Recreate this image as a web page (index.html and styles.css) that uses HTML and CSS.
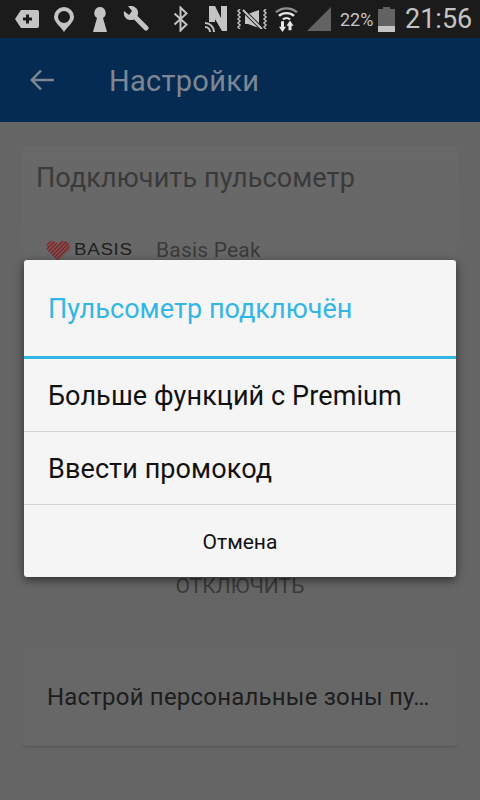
FILE: index.html
```html
<!DOCTYPE html>
<html lang="ru">
<head>
    <meta charset="UTF-8">
    <meta name="viewport" content="width=device-width, initial-scale=1.0">
    <title>Настройки</title>
    <link rel="stylesheet" href="styles.css">
</head>
<body>

    <!-- Status bar -->
    <div class="status-bar">
        <svg class="ic ic-tag" viewBox="0 0 24 20"><path fill="#c4c4c4" d="M6 1h16a2 2 0 0 1 2 2v14a2 2 0 0 1-2 2H6L0 10z"/><path fill="#1b1b1b" d="M11 5.500h3v3h3v3h-3v3h-3v-3H8v-3h3z"/></svg>
        <svg class="ic ic-pin" viewBox="0 0 20 25"><path fill="#c4c4c4" fill-rule="evenodd" d="M10 0a10 10 0 0 1 10 10c0 5-6 9-10 15C6 19 0 15 0 10A10 10 0 0 1 10 0zm0 4a6 6 0 1 0 0 12 6 6 0 0 0 0-12z"/></svg>
        <svg class="ic ic-key" viewBox="0 0 14 25"><path fill="#c4c4c4" d="M7 0a6 6 0 0 1 3 11l4 14H0l4-14A6 6 0 0 1 7 0z"/></svg>
        <svg class="ic ic-wrench" viewBox="0 0 26 26"><path fill="none" stroke="#c4c4c4" stroke-width="5" stroke-linecap="round" d="M11 10l12 12"/><path fill="#c4c4c4" d="M1 5l5 4 3-4-4-5c5-1 11 2 10 8-1 4-4 6-7 6-5 0-8-4-7-9z"/></svg>
        <svg class="ic ic-bt" viewBox="0 0 15 26"><path fill="none" stroke="#c4c4c4" stroke-width="2" d="M1.500 7.500l12 11-6 6V1.500l6 6-12 11"/></svg>
        <svg class="ic ic-n" viewBox="0 0 22 26"><path fill="#c4c4c4" d="M4 0h6l6 12V0h6v25h-5L10 13v3H4z"/><path fill="none" stroke="#c4c4c4" stroke-width="2" d="M0 17a9 9 0 0 1 9 9M0 21a5 5 0 0 1 5 5"/></svg>
        <svg class="ic ic-mute" viewBox="0 0 31 20"><path fill="none" stroke="#c4c4c4" stroke-width="1.500" d="M3 0l-2 2 2 2-2 2 2 2-2 2 2 2-2 2 2 2-2 2 2 2M29 0l-2 2 2 2-2 2 2 2-2 2 2 2-2 2 2 2-2 2 2 2"/><path fill="#c4c4c4" d="M8 5h3l11-4v18L11 15H8z"/><path fill="none" stroke="#1b1b1b" stroke-width="4" d="M5 0l20 20"/><path fill="none" stroke="#c4c4c4" stroke-width="2" d="M6 1l19 19"/></svg>
        <svg class="ic ic-wifi" viewBox="0 0 23 30" preserveAspectRatio="none"><path fill="none" stroke="#8f8f8f" stroke-width="2.500" d="M1 7c6-6 15-6 21 0"/><path fill="none" stroke="#e8e8e8" stroke-width="2.500" d="M4 11c4-4 11-4 15 0M8 15c2-2 5-2 7 0"/><path fill="#e8e8e8" d="M6 17h3v6h2l-3.500 6L4 23h2zM15 16l3.500 6h-2v5h-3v-5h-2z"/></svg>
        <svg class="ic ic-signal" viewBox="0 0 24 24"><path fill="#626262" d="M24 0v24H0z"/></svg>
        <span class="battery-text">22%</span>
        <div class="battery"><div class="battery-cap"></div><div class="battery-body"><div class="battery-level"></div></div></div>
        <span class="clock">21:56</span>
    </div>

    <!-- Toolbar -->
    <div class="toolbar">
        <svg class="back" viewBox="0 0 24 24"><path fill="none" stroke="#7d8794" stroke-width="2.500" d="M24 12H2M11 2.500L1.800 12l9.200 9.500"/></svg>
        <span class="toolbar-title">Настройки</span>
    </div>

    <div class="content">
        <div class="card card-connect">
            <h2 class="card-title">Подключить пульсометр</h2>
            <div class="device">
                <div class="basis-logo">
                    <svg class="basis-heart" viewBox="0 0 24 21">
                        <clipPath id="heart"><path d="M12 21L1 10C-1 5 2 1 6 1c3 0 5 1 6 4 1-3 3-4 6-4 4 0 7 4 5 9z"/></clipPath>
                        <g clip-path="url(#heart)" fill="none" stroke="#8a2327" stroke-width="1.700"><path d="M0 6L6 0M0 10L10 0M0 14L14 0M0 18L18 0M0 22L22 0M2 24L26 0M6 24L26 4M10 24L26 8M14 24L26 12"/></g>
                    </svg>
                    <span class="basis-word">BASIS</span>
                </div>
                <span class="device-name">Basis Peak</span>
            </div>
            <div class="disconnect">ОТКЛЮЧИТЬ</div>
        </div>
        <div class="card card-zones">
            <p class="zones-text">Настрой персональные зоны пу…</p>
        </div>
    </div>

    <!-- Dialog over the dimmed page -->
    <div class="dialog">
        <div class="dialog-title">Пульсометр подключён</div>
        <div class="dialog-item">Больше функций с Premium</div>
        <div class="dialog-item">Ввести промокод</div>
        <div class="dialog-cancel">Отмена</div>
    </div>

</body>
</html>
```

FILE: styles.css
```css
body {
    font-family: Roboto, "Noto Sans", sans-serif;
    background-color: #656565;
    margin: 0;
    padding: 0;
    width: 480px;
    height: 800px;
    overflow: hidden;
    position: relative;
}
.status-bar {
    height: 38px;
    background-color: #1b1b1b;
    display: flex;
    align-items: center;
    padding-left: 15px;
}
.ic {
    display: block;
    flex: none;
}
.ic-tag { width: 24px; height: 20px; }
.ic-pin { width: 20px; height: 25px; margin-left: 15px; }
.ic-key { width: 14px; height: 25px; margin-left: 19px; }
.ic-wrench { width: 26px; height: 26px; margin-left: 16px; }
.ic-bt { width: 15px; height: 26px; margin-left: 24px; }
.ic-n { width: 22px; height: 26px; margin-left: 17px; }
.ic-mute { width: 31px; height: 20px; margin-left: 10px; }
.ic-wifi { width: 23px; height: 27px; margin-left: 7px; }
.ic-signal { width: 24px; height: 24px; margin-left: 9px; }
.battery-text {
    color: #c4c4c4;
    font-size: 18px;
    margin-left: 9px;
    width: 38px;
    flex: none;
}
.battery {
    width: 17px;
    height: 25px;
    display: flex;
    flex-direction: column;
    align-items: center;
    flex: none;
}
.battery-cap {
    width: 7px;
    height: 2px;
    background-color: #626262;
}
.battery-body {
    width: 17px;
    flex: 1;
    background-color: #626262;
    display: flex;
    align-items: flex-end;
}
.battery-level {
    width: 100%;
    height: 6px;
    background-color: #c4c4c4;
}
.clock {
    color: #c4c4c4;
    font-size: 27px;
    margin-left: 10px;
}
.toolbar {
    height: 84px;
    background-color: #062b52;
    display: flex;
    align-items: center;
    padding-left: 30px;
}
.back {
    width: 24px;
    height: 24px;
}
.toolbar-title {
    color: #7d8794;
    font-size: 29px;
    letter-spacing: 0.3px;
    margin-left: 55px;
    padding-top: 2px;
}
.content {
    padding: 24px 23px 0;
}
.card {
    background-color: #676767;
    border-radius: 3px;
    box-shadow: 0 1px 2px rgba(0, 0, 0, 0.15);
}
/* bottom edge of this card does not show in the screenshot */
.card-connect {
    height: 480px;
    margin-bottom: 22px;
    box-sizing: border-box;
    padding: 0 14px;
    display: flex;
    flex-direction: column;
    background: linear-gradient(#686868, #656565);
    box-shadow: none;
}
.card-title {
    margin: 17px 0 0 -1px;
    font-size: 27px;
    font-weight: 400;
    line-height: 30px;
    letter-spacing: 0.1px;
    color: #3a3a3a;
}
.device {
    display: flex;
    align-items: center;
    margin-top: 45px;
    padding-left: 9px;
}
.basis-logo {
    display: flex;
    align-items: center;
    width: 110px;
}
.basis-heart {
    width: 24px;
    height: 21px;
}
.basis-word {
    font-family: "Liberation Sans", sans-serif;
    font-size: 16px;
    letter-spacing: 0.6px;
    color: #1f1f1f;
    margin-left: 4px;
    display: inline-block;
    transform: scaleX(1.17);
    transform-origin: left;
}
.device-name {
    font-size: 21px;
    letter-spacing: 0.2px;
    color: #3a3a3a;
}
.disconnect {
    text-align: center;
    font-size: 21px;
    color: #3a3a3a;
    margin-top: 312px;
}
.card-zones {
    height: 98px;
    padding: 0 24px;
    display: flex;
    align-items: center;
}
.zones-text {
    margin: 0;
    font-size: 24px;
    letter-spacing: 0.2px;
    color: #1d1d1d;
    white-space: nowrap;
}
.dialog {
    position: absolute;
    left: 24px;
    top: 260px;
    width: 432px;
    height: 317px;
    background-color: #f5f5f5;
    border-radius: 3px;
    box-shadow: 0 3px 10px rgba(0, 0, 0, 0.55);
    display: flex;
    flex-direction: column;
}
.dialog-title {
    height: 99px;
    box-sizing: border-box;
    padding: 2px 0 0 24px;
    display: flex;
    align-items: center;
    font-size: 27px;
    letter-spacing: 0.05px;
    color: #33b5e5;
    border-bottom: 3px solid #33b5e5;
}
.dialog-item {
    height: 73px;
    box-sizing: border-box;
    padding: 2px 0 0 24px;
    display: flex;
    align-items: center;
    font-size: 27px;
    letter-spacing: 0.1px;
    color: #111;
    border-bottom: 1px solid #d4d4d4;
}
.dialog-cancel {
    flex: 1;
    display: flex;
    align-items: center;
    justify-content: center;
    font-size: 21px;
    padding-top: 1px;
    color: #111;
}
```
